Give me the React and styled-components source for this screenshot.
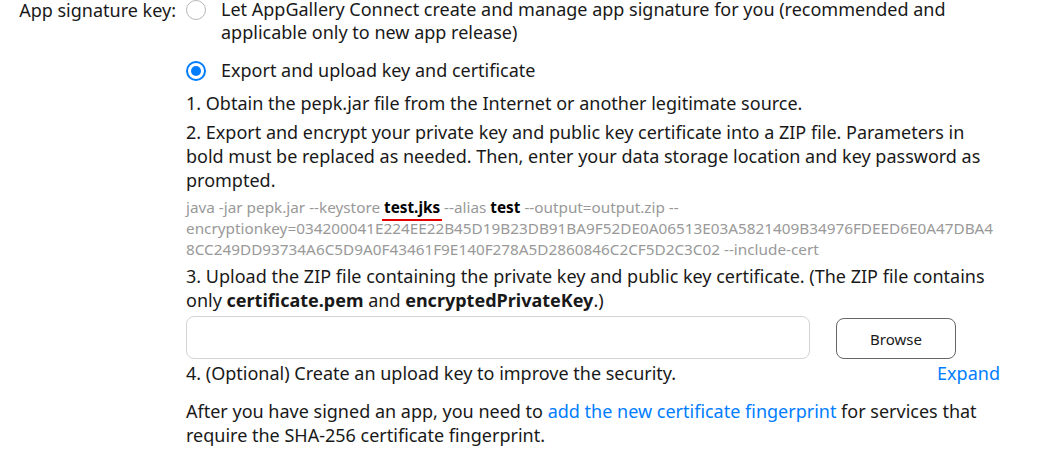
import React from 'react';
import styled, { createGlobalStyle } from 'styled-components';

const Global = createGlobalStyle`
  body {
    margin: 0;
    background: #fff;
    font-family: "Noto Sans", "Open Sans", sans-serif;
    color: #191919;
  }
`;

const Row = styled.div`
  display: flex;
  align-items: flex-start;
  margin-top: -2px;
`;

const Label = styled.div`
  width: 176px;
  flex: none;
  text-align: right;
  font-size: 18px;
  line-height: 24px;
`;

const Content = styled.div`
  margin-left: 10px;
  width: 814px;
  display: flex;
  flex-direction: column;
`;

const Option = styled.label`
  display: flex;
  align-items: flex-start;
  gap: 15px;
  font-size: 18px;
  line-height: 23px;
  margin-top: ${p => p.$top || '0px'};
`;

const Radio = styled.span`
  flex: none;
  width: 20px;
  height: 20px;
  box-sizing: border-box;
  border-radius: 50%;
  margin-top: 2px;
  border: ${p => (p.$checked ? '2px solid #007dff' : '1px solid #b8b8b8')};
  display: flex;
  align-items: center;
  justify-content: center;
  &::after {
    content: '';
    display: ${p => (p.$checked ? 'block' : 'none')};
    width: 10px;
    height: 10px;
    border-radius: 50%;
    background: #007dff;
  }
`;

const Para = styled.p`
  margin: ${p => p.$top || '0px'} 0 0 0;
  font-size: 18px;
  line-height: 24px;
`;

const Code = styled.p`
  margin: 5px 0 0 0;
  max-width: 813px;
  font-size: 15.3px;
  line-height: 21px;
  color: #999;
  overflow-wrap: anywhere;
  b {
    color: #000;
  }
`;

const Marked = styled.b`
  position: relative;
  &::after {
    content: '';
    position: absolute;
    left: -2px;
    right: -2px;
    bottom: -4px;
    height: 2px;
    background: #e60000;
  }
`;

const UploadRow = styled.div`
  display: flex;
  align-items: center;
  gap: 26px;
  margin-top: 4px;
`;

const FileBox = styled.div`
  width: 624px;
  height: 43px;
  box-sizing: border-box;
  border: 1px solid #d4d4d4;
  border-radius: 8px;
`;

const Button = styled.button`
  width: 120px;
  height: 41px;
  margin-top: 2px;
  border: 1px solid #666;
  border-radius: 8px;
  background: #fff;
  font-family: inherit;
  font-size: 15px;
  color: #191919;
`;

const OptionalRow = styled.div`
  display: flex;
  justify-content: space-between;
  font-size: 18px;
  line-height: 24px;
  margin-top: 2px;
`;

const Link = styled.a`
  color: #007dff;
  text-decoration: none;
`;

export default function App() {
  return (
    <>
      <Global />
      <Row>
        <Label>App signature key:</Label>
        <Content>
          <Option>
            <Radio />
            <span>
              Let AppGallery Connect create and manage app signature for you (recommended and
              applicable only to new app release)
            </span>
          </Option>
          <Option $top="15px">
            <Radio $checked />
            <span>Export and upload key and certificate</span>
          </Option>
          <Para $top="9px">1. Obtain the pepk.jar file from the Internet or another legitimate source.</Para>
          <Para $top="5px">
            2. Export and encrypt your private key and public key certificate into a ZIP file. Parameters in
            bold must be replaced as needed. Then, enter your data storage location and key password as
            prompted.
          </Para>
          <Code>
            java -jar pepk.jar --keystore <Marked>test.jks</Marked> --alias <b>test</b> --output=output.zip
            --encryptionkey=034200041E224EE22B45D19B23DB91BA9F52DE0A06513E03A5821409B34976FDEED6E0A47DBA48CC249DD93734A6C5D9A0F43461F9E140F278A5D2860846C2CF5D2C3C02
            --include-cert
          </Code>
          <Para $top="4px">
            3. Upload the ZIP file containing the private key and public key certificate. (The ZIP file contains
            only <b>certificate.pem</b> and <b>encryptedPrivateKey</b>.)
          </Para>
          <UploadRow>
            <FileBox />
            <Button>Browse</Button>
          </UploadRow>
          <OptionalRow>
            <span>4. (Optional) Create an upload key to improve the security.</span>
            <Link href="#">Expand</Link>
          </OptionalRow>
          <Para $top="14px">
            After you have signed an app, you need to <Link href="#">add the new certificate fingerprint</Link> for
            services that require the SHA-256 certificate fingerprint.
          </Para>
        </Content>
      </Row>
    </>
  );
}
